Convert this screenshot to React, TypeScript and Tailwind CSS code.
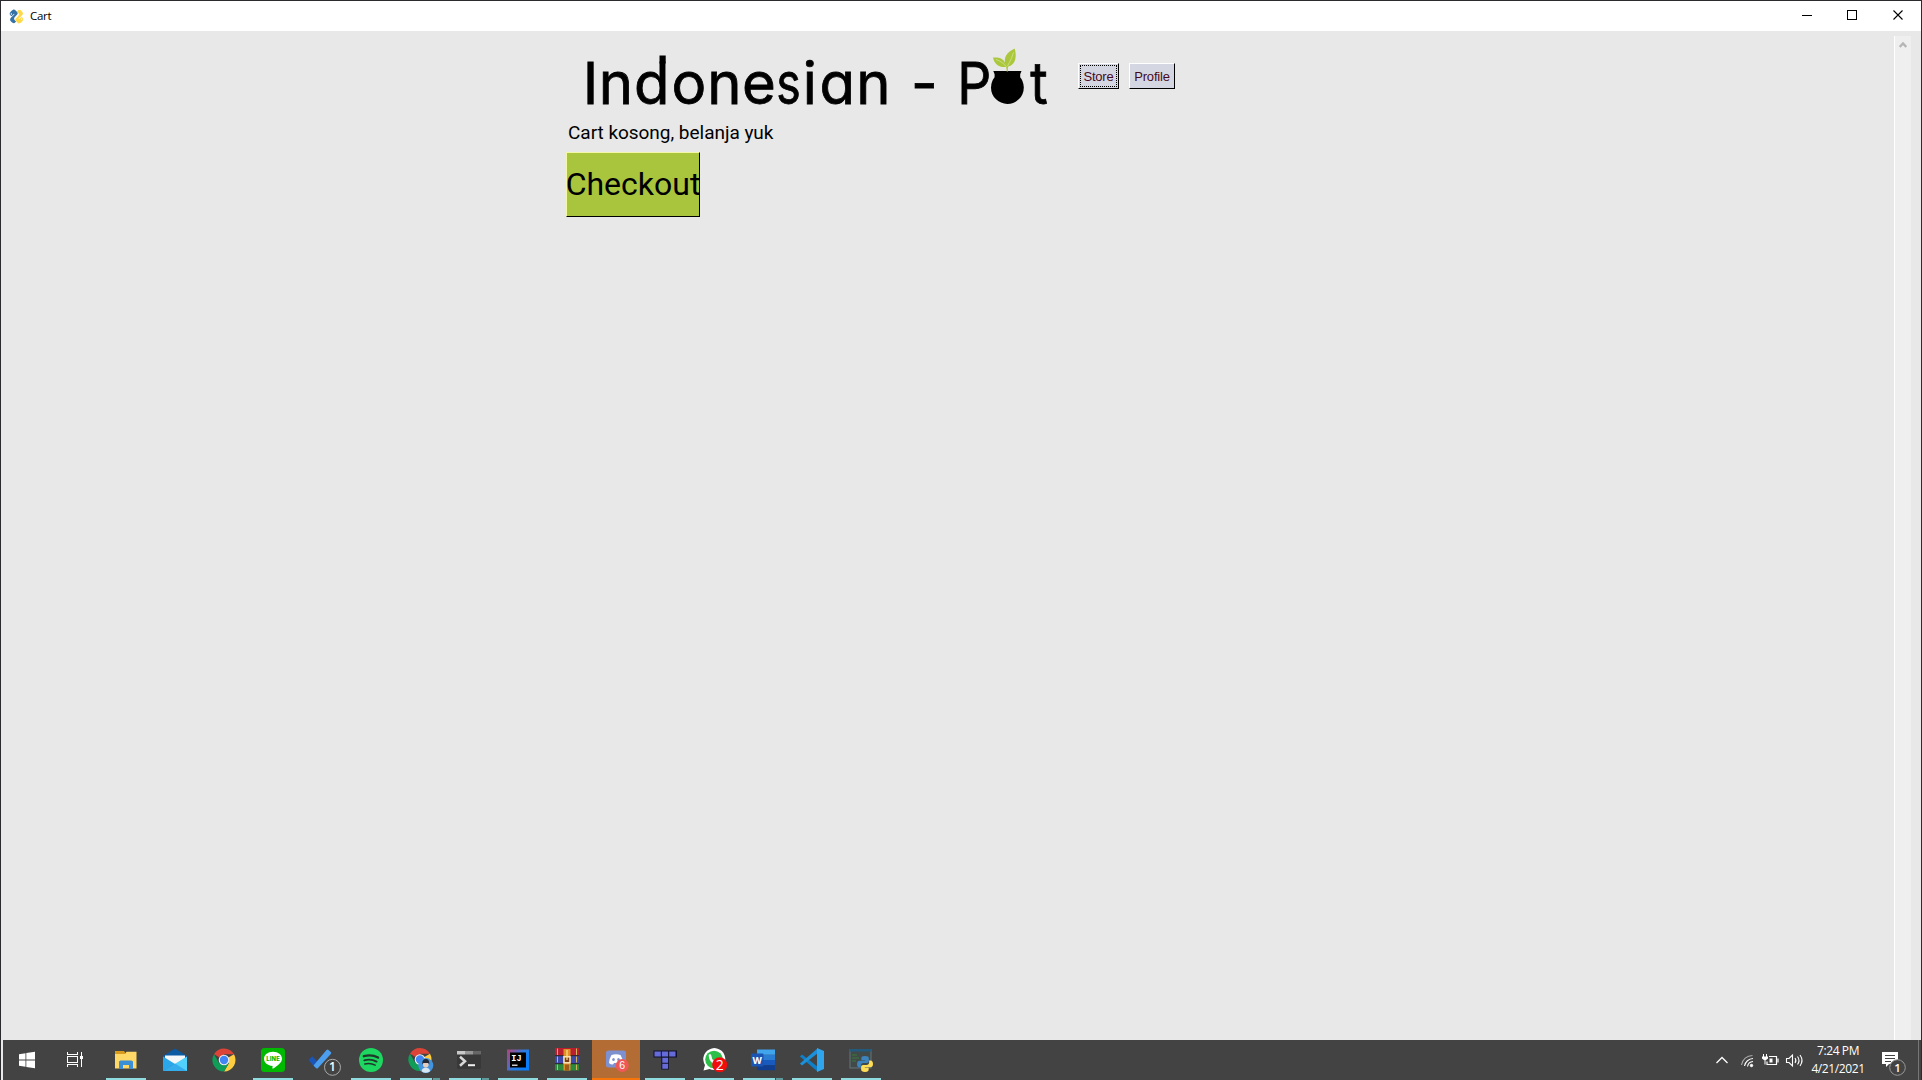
import type { ReactNode } from "react";

function PythonMark({ className }: { className: string }) {
  return (
    <svg viewBox="0 0 24 24" className={className} overflow="visible">
      <g transform="rotate(-45 12 12)">
        <path fill="#3672a5" d="M11.900 0C7.800 0 6.500 1.200 6.500 3.600v2.600h5.800v.9H4.200C1.600 7.100 0 8.900 0 12.100c0 3.400 1.400 5.200 3.600 5.200h2.200v-3c0-2.100 1.700-3.700 3.800-3.700h5.300c1.700 0 2.900-1.300 2.900-3V3.600C17.800 1.200 16 0 11.900 0Z" />
        <circle cx="9" cy="3.300" r="1.100" fill="#fff" />
        <path fill="#ffd847" d="M12.100 24c4.100 0 5.400-1.200 5.400-3.600v-2.600h-5.800v-.9h8.100c2.600 0 4.200-1.800 4.200-5 0-3.400-1.400-5.200-3.600-5.200h-2.200v3c0 2.100-1.700 3.700-3.800 3.700H9.100c-1.700 0-2.900 1.300-2.900 3v4C6.200 22.800 8 24 12.100 24Z" />
        <circle cx="15" cy="20.700" r="1.100" fill="#fff" />
      </g>
    </svg>
  );
}

function TitleBar() {
  return (
    <header className="flex h-[30px] shrink-0 items-center bg-white">
      <PythonMark className="ml-2 h-[15px] w-[15px]" />
      <span className="ml-[6px] font-['Open_Sans'] text-[11.5px] leading-[30px] tracking-[-0.3px] text-black">Cart</span>
      <svg className="ml-auto h-[30px] w-[137px]" viewBox="1784 1 137 30" fill="none" stroke="#000" shapeRendering="crispEdges">
        <path d="M1802 15.500h10" />
        <rect x="1847.500" y="10.500" width="9" height="9" />
        <path d="M1893.500 10.500l9 9M1902.500 10.500l-9 9" shapeRendering="auto" strokeWidth="1.100" />
      </svg>
    </header>
  );
}

function Logo() {
  return (
    <svg className="h-[65px] w-[480px] shrink-0" viewBox="566 46 480 65" overflow="visible">
      <g fontFamily="Inter, sans-serif" fontSize="58" fill="#000" stroke="#000" strokeWidth=".8" style={{ fontFeatureSettings: '"cv11"' }}>
        <text y="103.700" x="582.700 598.700 634 671.500 707.200 742">
          Indone
        </text>
        <text transform="translate(776.200 103.700) scale(.8 1)">s</text>
        <text y="103.700" x="802.700 819.500 856.200">
          ian
        </text>
        <text y="103.700" x="911">-</text>
        <text transform="translate(957.300 103.700) scale(.92 1)">P</text>
        <text transform="translate(1030.200 103.700) scale(.92 1)">t</text>
      </g>
      <path d="M659.500 55.500h6.200v8h-6.200Z" />
      <path d="M993.300 71h28.200l-1.300 3.200v3.500q-13 3-25.600 0v-3.500Z" />
      <circle cx="1007.400" cy="87.500" r="16.400" />
      <path fill="#abc83c" d="M1006.700 71.500c0-2-.2-3.500-.7-4.500-6.500.8-11.500-2.500-13-9.500 7-.7 12 1.500 12.700 8C1003 57 1007 52 1014.700 48.500c2.500 8.500.5 16.500-6.500 18-.4 1-.3 3-.3 5Z" />
      <path d="M996 59.500c4.500 1.500 8 4 10.500 7.500M1013.500 52.500c-1.500 5-3.500 9-6 13.500" stroke="#dfe9b0" strokeWidth=".6" fill="none" />
    </svg>
  );
}

function NavButton({ label, focused, className }: { label: string; focused?: boolean; className: string }) {
  return (
    <button className={`h-[26px] border border-t-white border-l-white border-r-black border-b-black bg-[#d4d7e2] p-px ${className}`}>
      <span
        className={`flex h-full items-center justify-center font-['Liberation_Sans'] text-[13px] leading-none tracking-[-0.2px] whitespace-nowrap text-[#470a1c] ${focused ? "border border-dotted border-black" : ""}`}
      >
        {label}
      </span>
    </button>
  );
}

function CartPage() {
  return (
    <main className="flex min-h-0 flex-1 bg-[#e8e8e8]">
      <div className="flex flex-1 flex-col items-start pt-[15px] pl-[565px]">
        <div className="flex h-[65px]">
          <Logo />
          <div className="flex pt-[17px] pl-[32px]">
            <NavButton label="Store" focused className="w-[41px]" />
            <NavButton label="Profile" className="ml-[10px] w-[46px]" />
          </div>
        </div>
        <p className="mt-[9px] ml-[2px] h-[26px] font-['Roboto'] text-[19px] leading-[26px] tracking-[-0.03px] whitespace-nowrap text-black">
          Cart kosong, belanja yuk
        </p>
        <button className="mt-[6px] flex h-[65px] w-[134px] items-center justify-center overflow-hidden border border-t-[#f2f8a8] border-l-[#f2f8a8] border-r-black border-b-black bg-[#a9c53d] pb-[2px] font-['Roboto'] text-[32px] leading-none whitespace-nowrap text-black">
          Checkout
        </button>
      </div>
      <div className="mt-[5px] mr-[10px] w-[17px] border-l border-white bg-[#efefef]">
        <svg className="mt-[5px] ml-[4px] h-[8px] w-[8px]" viewBox="0 0 8 8" fill="none" stroke="#b5b5b5" strokeWidth="2.300">
          <path d="M.7 6 4 2.500 7.300 6" />
        </svg>
      </div>
    </main>
  );
}

function Chrome() {
  return (
    <>
      <path fill="#db4437" d="M12 12 2 6.200A11.500 11.500 0 0 1 22 6.300H12Z" />
      <path fill="#ffcd40" d="M12 12 22 6.300A11.500 11.500 0 0 1 12 23.500L17 15Z" />
      <path fill="#0f9d58" d="M2 6.200A11.500 11.500 0 0 0 12 23.500L17 15l-5 2.500-5-2.500Z" />
      <circle cx="12" cy="12" r="5.300" fill="#f1f1f1" />
      <circle cx="12" cy="12" r="4.200" fill="#4285f4" />
    </>
  );
}

type AppKind = { name: string; bar: "none" | "one" | "many" | "alert"; art: ReactNode };

const badgeFont = "Open Sans, sans-serif";

const apps: AppKind[] = [
  {
    name: "Explorer",
    bar: "one",
    art: (
      <>
        <path fill="#d99b1c" d="M1 3h9l1.500 2v3H1Z" />
        <path fill="#ffd867" d="M1 6h10l1.500-2.300H22.500V20.500H1Z" />
        <path fill="#3b8fd4" d="M5 21v-7.500L6.500 12.500h11L19 13.500V21h-4v-4H9v4Z" />
      </>
    ),
  },
  {
    name: "Mail",
    bar: "none",
    art: (
      <>
        <path fill="#0c59a4" d="M0 8 12 .5 24 8v3H0Z" />
        <path fill="#f4f6f8" d="M2 7.500h20v3L12 17 2 11Z" />
        <path fill="#2aa6ea" d="M0 8.500 12 16 0 23Z" />
        <path fill="#50d0fa" d="M24 8.500V23H0Z" />
        <path fill="#1f8fe0" d="M0 23 12 15.500 24 23Z" opacity=".55" />
      </>
    ),
  },
  { name: "Chrome", bar: "none", art: <Chrome /> },
  {
    name: "Line",
    bar: "one",
    art: (
      <>
        <rect width="24" height="24" rx="3.500" fill="#00b900" />
        <path fill="#fff" d="M12 3.700c5.100 0 9 3.100 9 7.100 0 3.700-4.500 7-8.700 9.700-.8.500-1-.2-.8-1.300l.1-1.200C6.800 17.600 3 14.800 3 10.800c0-4 3.900-7.100 9-7.100Z" />
        <text x="5.300" y="13.100" fontFamily="Inter, sans-serif" fontSize="5.800" fontWeight="800" fill="#00b900" textLength="13.500">LINE</text>
      </>
    ),
  },
  {
    name: "To Do",
    bar: "none",
    art: (
      <>
        <path fill="#1b55b8" d="m-1.500 12 3.700-3.700 7 7-3.700 4.700Z" />
        <path fill="#4c9fee" d="m3.500 17.500 13-15.500q1-1 2 0l2.300 2q1 1 0 2L8 20q-1 1-2 0Z" />
        <circle cx="22.500" cy="19.300" r="8" fill="#434343" stroke="#b4b4b4" strokeWidth=".9" />
        <text x="22.500" y="23.300" textAnchor="middle" fontFamily={badgeFont} fontSize="12" fontWeight="600" fill="#fff">1</text>
      </>
    ),
  },
  {
    name: "Spotify",
    bar: "one",
    art: (
      <>
        <circle cx="12" cy="12" r="12" fill="#1ed760" />
        <g fill="none" stroke="#20382a" strokeLinecap="round">
          <path d="M4.800 8.200c5-1.400 10-1 14.300 1.400" strokeWidth="2.300" />
          <path d="M5.300 12.300c4.500-1.200 8.500-.8 12.300 1.300" strokeWidth="1.900" />
          <path d="M5.800 16c3.800-.9 7.200-.6 10.400 1.200" strokeWidth="1.500" />
        </g>
      </>
    ),
  },
  {
    name: "Chrome profile",
    bar: "many",
    art: (
      <>
        <g transform="translate(0 -.5)">
          <Chrome />
        </g>
        <circle cx="17.800" cy="17.500" r="7.500" fill="#4294df" />
        <path fill="#d6e6f2" d="M13.500 23.300c.3-2.500 2-3.500 4.300-3.500s4 1 4.300 3.500q-4.300 3-8.600 0Z" />
        <circle cx="17.800" cy="16.700" r="2.800" fill="#e7cdbd" />
        <path fill="#252a38" d="M14.300 16.500c-.3-4 1.200-5.500 3.500-5.500s3.800 1.500 3.500 5.500l-1-1.500h-5Z" />
      </>
    ),
  },
  {
    name: "Terminal",
    bar: "many",
    art: (
      <>
        <rect y="3" width="24" height="18" rx="1" fill="#383838" />
        <path fill="#c9c9c9" d="M0 3h8v3.500H0Z" />
        <path fill="#969696" d="M8 3h8v3.500H8Z" />
        <path fill="#666" d="M16 3h8v3.500h-8Z" />
        <path d="m3 8.700 5 4.500-5 4.500" fill="none" stroke="#d8d8d8" strokeWidth="2.500" />
        <path d="M11 17.200h7" stroke="#f0f0f0" strokeWidth="2" />
      </>
    ),
  },
  {
    name: "IntelliJ",
    bar: "one",
    art: (
      <>
        <defs>
          <linearGradient id="ij" x1="0" y1="0" x2="1" y2=".6">
            <stop offset="0" stopColor="#b24478" />
            <stop offset=".3" stopColor="#7a5aa8" />
            <stop offset=".6" stopColor="#2a7de1" />
            <stop offset="1" stopColor="#087cfa" />
          </linearGradient>
        </defs>
        <rect x="1" y="1.500" width="22" height="21" fill="url(#ij)" />
        <rect x="4" y="4.500" width="16" height="15" fill="#000" />
        <text x="5.300" y="12.500" fontFamily="Liberation Mono, monospace" fontSize="8.500" fontWeight="700" fill="#fff">IJ</text>
        <path d="M6 17.200h5.500" stroke="#fff" strokeWidth="1.200" />
      </>
    ),
  },
  {
    name: "WinRAR",
    bar: "one",
    art: (
      <>
        <path fill="#b91f2e" d="M0 0h24v7.500H0Z" />
        <path fill="#3d49a8" d="M0 8h24v7.500H0Z" />
        <path fill="#2b8a3c" d="M0 16h24v6.500H0Z" />
        <path fill="#222" d="M0 7h24v1.300H0ZM0 15h24v1.300H0Z" opacity=".65" />
        <path stroke="#d4b25e" strokeWidth="1" d="M2.500.5V7M2.500 8.500v6M2.500 16.500v5.500M21.500.5V7M21.500 8.500v6M21.500 16.500v5.500" />
        <path fill="#df9126" d="M8.500 1h7v21.500h-7Z" />
        <path fill="#9c5a1c" d="M10 16.500h4v6h-4Z" />
        <rect x="9" y="8.800" width="6" height="6" fill="#7c4018" stroke="#f7e8b8" strokeWidth="1.500" />
        <path d="M12 2v10" stroke="#ffe08c" strokeWidth="1.200" />
      </>
    ),
  },
  {
    name: "Discord",
    bar: "alert",
    art: (
      <>
        <path fill="#7d90cf" d="M4.500 2.500h15q2.500 0 2.500 2.500v17l-4-2.500H4.500q-2.500 0-2.500-2.500V5q0-2.500 2.500-2.500Z" />
        <path fill="#fff" d="M7.500 7Q12 5.500 16.500 7q2.500 4 2.500 8-1.500 1.500-4 1.500l-1-1.500h-4l-1 1.500q-2.500 0-4-1.500 0-4 2.500-8Z" />
        <ellipse cx="9.500" cy="11.500" rx="1.300" ry="1.500" fill="#7d90cf" />
        <ellipse cx="14.500" cy="11.500" rx="1.300" ry="1.500" fill="#7d90cf" />
        <circle cx="18.200" cy="17.500" r="6.500" fill="#f05757" />
        <text x="18.200" y="21.400" textAnchor="middle" fontFamily="Liberation Sans, sans-serif" fontSize="10.500" fill="#fff">6</text>
      </>
    ),
  },
  {
    name: "Tetris blocks",
    bar: "one",
    art: (
      <>
        <path fill="#111128" d="M.5 2.500h23.500v7h-8v12H8.300V9.500H.5Z" />
        <path fill="#666bda" d="M1.500 3.500h6.300v5H1.500ZM8.800 3.500h6.300v5H8.800ZM16.200 3.500h6.300v5h-6.300ZM9.300 9.700h5.800v5H9.300ZM9.300 15.700h5.800v5H9.300Z" />
      </>
    ),
  },
  {
    name: "WhatsApp",
    bar: "one",
    art: (
      <>
        <path fill="#fff" d="M1.500 22.500 3 17A11 11 0 1 1 7.500 21Z" />
        <circle cx="12" cy="11.500" r="8.800" fill="#2cc04b" />
        <path d="M8 7.500q.2 4 3.200 6.600 2.500 2.100 5 2.200" fill="none" stroke="#fff" strokeWidth="2.600" strokeLinecap="round" />
        <circle cx="17.700" cy="16.800" r="7.500" fill="#f20d0d" />
        <text x="17.700" y="21.600" textAnchor="middle" fontFamily={badgeFont} fontSize="14" fill="#fff">2</text>
      </>
    ),
  },
  {
    name: "Word",
    bar: "many",
    art: (
      <>
        <path fill="#41a5ee" d="M6 1.500h18v5.300H6Z" />
        <path fill="#2b7cd3" d="M6 6.800h18V12H6Z" />
        <path fill="#185abd" d="M6 12h18v5.200H6Z" />
        <path fill="#103f91" d="M6 17.200h18v5H6Z" />
        <rect y="5.500" width="12.500" height="13" rx="1" fill="#1a55b4" />
        <text x="6.300" y="15.700" textAnchor="middle" fontFamily="Inter, sans-serif" fontSize="9.500" fontWeight="700" fill="#fff">W</text>
      </>
    ),
  },
  {
    name: "VS Code",
    bar: "one",
    art: (
      <>
        <path fill="#0f7fc8" d="m0 8.200 2-1.700 16 12.500V24L.3 8.800Z" />
        <path fill="#1a91da" d="m0 15.800 2 1.700L18 5V0L.3 15.200Z" />
        <path fill="#2fa5ee" d="m17 0 7 3v18l-7 3Z" />
      </>
    ),
  },
  {
    name: "Python console",
    bar: "one",
    art: (
      <>
        <rect x="1" y="1.500" width="21" height="18.500" fill="#414a48" stroke="#66757b" />
        <path fill="#215a7c" d="M.5 1h22v2.500H.5Z" />
        <path d="M3 7h5M3 10h7M3 13h4" stroke="#397a3c" strokeWidth="1.200" />
        <svg x="8" y="8" width="16" height="16" viewBox="0 0 24 24" className="h-4 w-4">
          <path fill="#3d83bd" d="M11.900 0C7.800 0 6.500 1.200 6.500 3.600v2.600h5.800v.9H4.200C1.600 7.100 0 8.900 0 12.100c0 3.400 1.400 5.200 3.600 5.200h2.200v-3c0-2.100 1.700-3.700 3.800-3.700h5.300c1.700 0 2.900-1.300 2.900-3V3.600C17.800 1.200 16 0 11.900 0Z" />
          <path fill="#ffde57" d="M12.100 24c4.100 0 5.400-1.200 5.400-3.600v-2.600h-5.800v-.9h8.100c2.600 0 4.200-1.800 4.200-5 0-3.400-1.400-5.200-3.600-5.200h-2.200v3c0 2.100-1.700 3.700-3.800 3.700H9.100c-1.700 0-2.900 1.300-2.900 3v4C6.200 22.800 8 24 12.100 24Z" />
        </svg>
      </>
    ),
  },
];

function TaskItem({ app }: { app: AppKind }) {
  const alert = app.bar === "alert";
  return (
    <div className={`flex h-10 w-12 flex-col items-center ${alert ? "bg-[#b46c35]" : ""}`} title={app.name}>
      <svg viewBox="0 0 24 24" className="mt-2 h-6 w-6" overflow="visible">
        {app.art}
      </svg>
      {app.bar !== "none" && (
        <div className={`mt-auto flex h-[2px] ${alert ? "w-12 bg-[#f77408]" : "w-10 bg-[#8fdce0]"}`}>
          {app.bar === "many" && <div className="ml-auto w-[8px] border-l border-[#40494a] bg-[#5f9a9d]" />}
        </div>
      )}
    </div>
  );
}

function Taskbar() {
  return (
    <footer className="ml-[2px] flex h-10 shrink-0 bg-[#434343]">
      <svg className="h-10 w-[99px]" viewBox="3 1040 99 40">
        <path fill="#fff" d="M19 1054.200l6.500-1v6.300H19ZM26.300 1053l8.700-1.200v7.700h-8.700ZM19 1060.500h6.500v6.300l-6.500-1ZM26.300 1060.500H35v7.700l-8.700-1.200Z" />
        <g fill="none" stroke="#fff" shapeRendering="crispEdges">
          <path d="M67.500 1052v2.500h10V1052M67.500 1067v-2.500h10v2.500" />
          <rect x="67.500" y="1056.500" width="10" height="6" />
          <path d="M81.500 1052v15" />
        </g>
        <path fill="#fff" d="M80 1056h3v3h-3Z" />
      </svg>
      <div className="flex gap-px">
        {apps.map((app) => (
          <TaskItem key={app.name} app={app} />
        ))}
      </div>
      <svg className="ml-auto h-10 w-[96px]" viewBox="1710 1040 96 40" fill="none" stroke="#fff">
        <path d="M1716.500 1063l5.500-5.500 5.500 5.500" strokeWidth="1.300" />
        <g strokeWidth="1.100">
          <path d="M1741.500 1065a11 11 0 0 1 11-9.500" stroke="#aaa" />
          <path d="M1744.500 1066a9 9 0 0 1 8.500-7.500" />
          <path d="M1747.500 1066.500a6 6 0 0 1 5.500-5" />
        </g>
        <circle cx="1751.500" cy="1065.500" r="1.200" fill="#fff" />
        <path d="M1769 1056.500h7.500v8h-9.500v-3M1778 1058.500v4" strokeWidth="1.200" />
        <path fill="#fff" d="M1769.500 1058.500h3v4h-3Z" stroke="none" />
        <path fill="#fff" d="M1762 1056.500h6v2q-3 3.500-6 0Z" stroke="none" />
        <path d="M1763.500 1054v3M1766.500 1054v3M1765 1060v4.500" strokeWidth="1" />
        <path d="M1786.500 1058.500h2.500l3.500-3.500v11l-3.500-3.500h-2.500Z" strokeWidth="1.100" />
        <path d="M1795 1058q1.800 2.500 0 5M1797.500 1056.500q3 4 0 8M1800 1055q4 5.500 0 11" strokeWidth="1.100" />
      </svg>
      <div className="flex w-[64px] flex-col items-center pt-[2px] font-['Open_Sans'] text-[12px] leading-[18px] tracking-[-0.4px] whitespace-nowrap text-white">
        <span>7:24 PM</span>
        <span>4/21/2021</span>
      </div>
      <svg className="h-10 w-[51px]" viewBox="1870 1040 51 40">
        <path fill="#fff" d="M1882 1052h16v12h-9l-3 3v-3h-4Z" />
        <path d="M1885 1055.500h10M1885 1058.500h10M1885 1061.500h6" stroke="#434343" />
        <circle cx="1897.500" cy="1067.500" r="7.800" fill="#434343" stroke="#999" />
        <text x="1897.500" y="1071.700" textAnchor="middle" fontFamily={badgeFont} fontSize="11.500" fontWeight="600" fill="#fff">1</text>
        <path d="M1918.500 1040v40" stroke="#777" />
      </svg>
    </footer>
  );
}

export default function App() {
  return (
    <div className="flex h-[1080px] w-[1922px] flex-col overflow-hidden border-x border-t border-[#2b2b2d] bg-[#e8e8e8]">
      <TitleBar />
      <CartPage />
      <Taskbar />
    </div>
  );
}
